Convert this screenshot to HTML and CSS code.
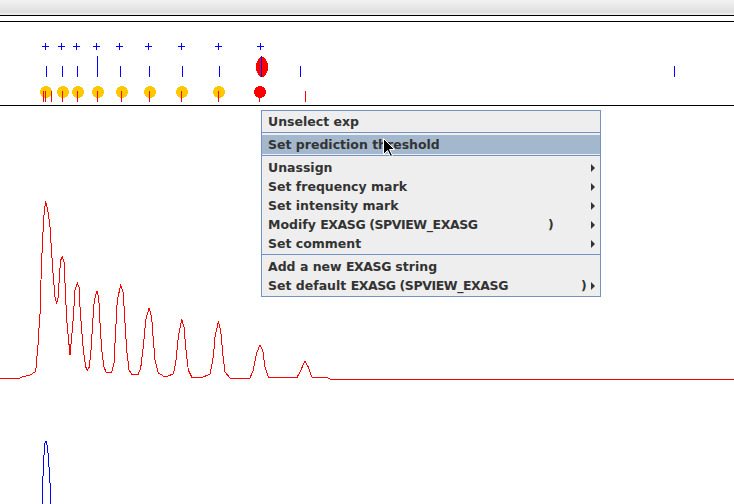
FILE: index.html
```html
<!DOCTYPE html>
<html>
<head>
<meta charset="utf-8">
<link rel="stylesheet" href="styles.css">
</head>
<body>
<div class="app">
  <div class="topbar"></div>
  <div class="ruler"></div>
  <svg class="markers" width="734" height="83" viewBox="0 22 734 83" shape-rendering="crispEdges">
    <g class="plus" stroke="#0000ff" stroke-width="1">
      <path d="M42 46.5h7M45.5 43v7"/>
      <path d="M58 46.5h7M61.5 43v7"/>
      <path d="M73 46.5h7M76.5 43v7"/>
      <path d="M93 46.5h7M96.5 43v7"/>
      <path d="M116 46.5h7M119.5 43v7"/>
      <path d="M145 46.5h7M148.5 43v7"/>
      <path d="M178 46.5h7M181.5 43v7"/>
      <path d="M215 46.5h7M218.5 43v7"/>
      <path d="M257 46.5h7M260.5 43v7"/>
    </g>
    <ellipse cx="262" cy="67" rx="6" ry="10" fill="#ff0000"/>
    <g stroke="#0000ff" stroke-width="1">
      <path d="M46.5 66v11M62.5 66v11M77.5 66v11M97.5 56v21M120.5 66v11M149.5 66v11M182.5 66v11M219.5 66v11M261.5 56v21M300.5 66v11M674.5 66v11"/>
    </g>
    <g fill="#ffc800">
      <circle cx="46" cy="92" r="6"/>
      <circle cx="63" cy="92" r="6"/>
      <circle cx="78" cy="92" r="6"/>
      <circle cx="98" cy="92" r="6"/>
      <circle cx="122" cy="92" r="6"/>
      <circle cx="150" cy="92" r="6"/>
      <circle cx="182" cy="92" r="6"/>
      <circle cx="219" cy="92" r="6"/>
    </g>
    <circle cx="260" cy="92" r="6" fill="#ff0000"/>
    <g stroke="#ff0000" stroke-width="1">
      <path d="M43.5 91v11M45.5 91v11M51.5 91v11M62.5 91v11M77.5 91v11M97.5 91v11M121.5 91v11M149.5 91v11M181.5 91v11M218.5 91v11M259.5 96v6M305.5 91v11"/>
    </g>
  </svg>
  <div class="axis"></div>
  <svg class="spectrum" width="734" height="398" viewBox="0 106 734 398" shape-rendering="crispEdges">
    <polyline fill="none" stroke="#ff0000" stroke-width="1" points="0,378 20,378 21.7,377 30,375 35,372 36,368 38,345 39.3,323 40.7,306 41,280 41.5,265 42.7,237 44.3,210 45.7,203 46.7,205 48.3,213 50,227 51.7,253 53.3,277 55,297 56.7,303 58.3,297 59.3,277 60.7,260 62.3,257 64,262 65,283 66.7,320 68.3,337 70,355 71.7,337 73.3,317 75,290 77.3,283 79,287 80,307 81.7,330 83.3,350 85.7,367 87.3,370 89.3,367 91,350 92.7,323 94.3,300 97,291 98.7,297 100,323 101.7,350 104,367 106,372 111.7,372 114,363 115.7,330 117.3,300 120.7,285 123.3,293 125,323 126.7,350 129,370 131.7,374 138.3,374 140.7,368 143.3,347 145.7,320 149,308 151.7,317 153.3,340 155,360 158.3,373 165,377 173.3,374 175.7,363 178.3,337 181.7,319 184,327 186,350 188.3,370 191.7,377 203.3,377 210,374 213.3,357 215,337 218.3,322 220.7,330 222.7,353 225,372 230,378 250,378 253.3,370 256.7,353 260,345 262.7,350 265,367 268.3,377 296.7,378 300,372 305,361 308.3,367 311.7,377 328,378 330,379 734,379"/>
    <polyline fill="none" stroke="#0000ff" stroke-width="1" points="42,505 42.3,496 43.3,468 44.3,450 45,443 46,441 47,445 48.3,455 49.3,472 50.3,488 50.8,505"/>
  </svg>

  <div class="popup">
    <div class="item">Unselect exp</div>
    <div class="sep"></div>
    <div class="item sel">Set prediction threshold</div>
    <div class="sep"></div>
    <div class="item"><span>Unassign</span><span class="arrow"></span></div>
    <div class="item"><span>Set frequency mark</span><span class="arrow"></span></div>
    <div class="item"><span>Set intensity mark</span><span class="arrow"></span></div>
    <div class="item"><span><span class="fix fix-a">Modify <span class="caps">EXASG (SPVIEW_EXASG</span></span>)</span><span class="arrow"></span></div>
    <div class="item"><span>Set comment</span><span class="arrow"></span></div>
    <div class="sep"></div>
    <div class="item"><span>Add a new <span class="caps">EXASG</span> string</span></div>
    <div class="item"><span><span class="fix fix-b">Set default <span class="caps">EXASG (SPVIEW_EXASG</span></span>)</span><span class="arrow"></span></div>
  </div>

  <svg class="cursor" width="14" height="20" viewBox="0 0 14 20">
    <path d="M0.5 0.5 L0.5 16.5 L4.5 12.5 L7.5 18.5 L9.5 17.5 L6.5 11.5 L11.5 11.5 Z" fill="#000" stroke="#fff" stroke-width="1"/>
  </svg>
</div>
</body>
</html>
```

FILE: styles.css
```css
html, body {
  margin: 0;
  padding: 0;
  background: #ffffff;
}

.app {
  position: relative;
  width: 734px;
  height: 504px;
  overflow: hidden;
  background: #ffffff;
  font-family: "DejaVu Sans", sans-serif;
}

.topbar {
  height: 15px;
  border-bottom: 1px solid #000;
  background: linear-gradient(to bottom, #f2f2f2 0, #dedede 13px, #ececec 13px, #ececec 15px);
}

.ruler {
  height: 5px;
  border-bottom: 1px solid #000;
}

.markers, .spectrum {
  display: block;
}

.axis {
  height: 0;
  border-top: 1px solid #000;
}

.popup {
  position: absolute;
  left: 261px;
  top: 110px;
  width: 338px;
  padding: 1px 0;
  background: #eeeeee;
  border: 1px solid #7391c4;
  color: #333333;
  font-size: 12.5px;
  font-weight: bold;
}

.item {
  height: 19px;
  line-height: 19px;
  padding: 0 5px 0 6px;
  display: flex;
  align-items: center;
  justify-content: space-between;
  white-space: nowrap;
}

.item.sel {
  background: #a3b8cc;
}

.caps {
  letter-spacing: -0.42px;
}

.sep {
  height: 4px;
  box-sizing: border-box;
  border-top: 1px solid #7391c4;
  position: relative;
  top: 1px;
}

.fix {
  display: inline-block;
}

.fix-a {
  width: 280px;
}

.fix-b {
  width: 313px;
}

.arrow {
  width: 0;
  height: 0;
  border-left: 4px solid #333333;
  border-top: 4px solid transparent;
  border-bottom: 4px solid transparent;
}

.cursor {
  position: absolute;
  left: 383px;
  top: 138px;
}
```
